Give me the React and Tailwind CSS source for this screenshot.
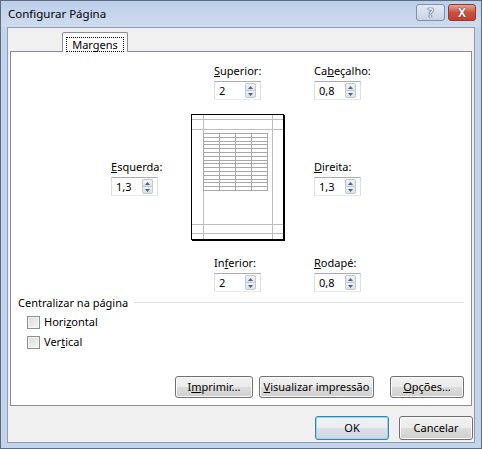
import React from 'react';

const Arrow = ({up}) => (
  <svg width="5" height="3" viewBox="0 0 5 3">
    {up ? <path d="M0 3 L2.5 0 L5 3 Z" fill="#4c607f" /> : <path d="M0 0 L2.5 3 L5 0 Z" fill="#4c607f" />}
  </svg>
)

const Spin = () => (
  <div className="flex flex-col mr-[4px]">
    <div className="w-[11px] h-[8px] flex items-center justify-center border border-[#c3c7ce] rounded-t-[2px] bg-[linear-gradient(#f5f6f8,#e1e4ea)]">
      <Arrow up />
    </div>
    <div className="w-[11px] h-[8px] -mt-px flex items-center justify-center border border-[#c3c7ce] rounded-b-[2px] bg-[linear-gradient(#f0f1f4,#dcdfe6)]">
      <Arrow />
    </div>
  </div>
)

const Field = ({pre = '', ul, post = '', value, className = ''}) => (
  <div className={`flex flex-col w-[47px] ${className}`}>
    <div className="leading-[15px] whitespace-nowrap">
      {pre}<span className="underline">{ul}</span>{post}
    </div>
    <div className="mt-[3px] w-[47px] h-[19px] flex items-center justify-between bg-white border border-[#abadb3] border-x-[#dbdfe6] border-b-[#e3e9ef] pl-[4px]">
      <span className="leading-[15px]">{value}</span>
      <Spin />
    </div>
  </div>
)

const Check = ({pre, ul, post}) => (
  <div className="h-[20px] flex items-center">
    <div className="w-[13px] h-[13px] border border-[#8e8f8f] bg-[linear-gradient(135deg,#d9dadb,#f7f7f7)] shadow-[inset_0_0_0_1px_#f4f4f4]" />
    <span className="ml-[4px]">{pre}<span className="underline">{ul}</span>{post}</span>
  </div>
)

const Btn = ({children, className = ''}) => (
  <button className={`h-[22px] flex items-center justify-center rounded-[3px] border border-[#707070] bg-[linear-gradient(#f2f2f2_0%,#ebebeb_50%,#dddddd_50%,#cfcfcf_100%)] shadow-[inset_0_0_0_1px_#fbfbfb] ${className}`}>
    {children}
  </button>
)

const PagePreview = () => {
  const rows = []
  for (let i = 0; i <= 15; i++) rows.push(Math.round(19 + i * 3.8) + 0.5)
  return (
    <svg width="94" height="127" viewBox="0 0 94 127" className="ml-[33px]">
      <rect x="0.5" y="0.5" width="92" height="125" fill="white" stroke="black" />
      <rect x="93" y="1" width="1" height="126" fill="black" />
      <rect x="1" y="126" width="93" height="1" fill="black" />
      {[12.5, 81.5].map(x => <line key={x} x1={x} y1="1" x2={x} y2="125" stroke="#bdbdbd" />)}
      {[5.5, 15.5, 110.5, 119.5].map(y => <line key={y} x1="1" y1={y} x2="92" y2={y} stroke="#bdbdbd" />)}
      {rows.map(y => <line key={y} x1="12" y1={y} x2="77" y2={y} stroke="#a8a8a8" />)}
      {[12.5, 28.5, 44.5, 60.5, 76.5].map(x => <line key={x} x1={x} y1="19" x2={x} y2="77" stroke="#a8a8a8" />)}
    </svg>
  )
}

const App = () => {
  return (
    <div className="w-[482px] h-[449px] border border-[#5d6c80] bg-[#c4d5eb] flex flex-col font-['Noto_Sans',sans-serif] text-[11px] text-black">
      {/* title bar */}
      <div className="h-[26px] flex justify-between bg-[linear-gradient(#bccfe9,#cfdcef)] pl-[7px] pr-[5px]">
        <div className="pt-[5px] text-[11.5px] leading-[16px]">Configurar Página</div>
        <div className="flex gap-[3px] mt-[3px] self-start">
          <div className="w-[29px] h-[17px] flex items-center justify-center rounded-[3px] border border-[#7e91ad] bg-[linear-gradient(#e3eaf4,#c7d4e6)] text-[12px] font-bold text-[#e9eef5] [text-shadow:0_0_1px_#3d4b60,0_0_1px_#3d4b60,0_0_1px_#3d4b60]">?</div>
          <div className="w-[28px] h-[17px] flex items-center justify-center rounded-[3px] border border-[#8c3a30] bg-[linear-gradient(#e7a393,#c9523f_50%,#c4402c)] text-[12px] font-bold text-white [text-shadow:0_0_1px_#5a1b12,0_0_1px_#5a1b12]">X</div>
        </div>
      </div>

      {/* client area */}
      <div className="flex-1 mx-[6px] mb-[5px] border border-[#8f9db1] bg-[#f0f0f0] flex flex-col">
        <div className="relative z-10 -mb-px mt-[4px] ml-[54px] w-[66px] h-[20px] border border-b-0 border-[#898c95] rounded-t-[2px] bg-white pt-[4px] px-[3px]">
          <div className="h-[15px] border border-dotted border-black flex items-center justify-center leading-[13px]">Margens</div>
        </div>

        <div className="mx-[2px] h-[355px] border border-[#898c95] bg-white flex flex-col">
          <div className="flex pt-[11px] pl-[203px]">
            <Field ul="S" post="uperior:" value="2" />
            <Field className="ml-[53px]" pre="Ca" ul="b" post="eçalho:" value="0,8" />
          </div>

          <div className="flex items-center mt-[14px] pl-[100px]">
            <Field ul="E" post="squerda:" value="1,3" />
            <PagePreview />
            <Field className="ml-[29px]" ul="D" post="ireita:" value="1,3" />
          </div>

          <div className="flex mt-[14px] pl-[203px]">
            <Field pre="In" ul="f" post="erior:" value="2" />
            <Field className="ml-[53px]" ul="R" post="odapé:" value="0,8" />
          </div>

          <div className="flex items-center mt-[3px] px-[7px] leading-[15px]">
            <span>Centralizar na página</span>
            <div className="flex-1 h-px bg-[#dcdfe3] ml-[6px]" />
          </div>

          <div className="flex flex-col mt-[2px] pl-[16px]">
            <Check pre="Hori" ul="z" post="ontal" />
            <Check pre="Ver" ul="t" post="ical" />
          </div>

          <div className="mt-auto flex justify-end pr-[7px] pb-[7px]">
            <Btn className="w-[78px]">I<span className="underline">m</span>primir...</Btn>
            <Btn className="w-[115px] ml-[6px]"><span className="underline">V</span>isualizar impressão</Btn>
            <Btn className="w-[74px] ml-[16px]"><span className="underline">O</span>pções...</Btn>
          </div>
        </div>

        <div className="mt-[10px] flex justify-end gap-[10px] pr-[1px]">
          <button className="w-[74px] h-[24px] flex items-center justify-center rounded-[3px] border border-[#3c7fb1] bg-[linear-gradient(#f2f4f6_0%,#e9edf1_50%,#dae0e6_50%,#cfd6dd_100%)] shadow-[inset_0_0_0_1px_#93d8f7]">OK</button>
          <Btn className="w-[74px] h-[24px]">Cancelar</Btn>
        </div>
      </div>
    </div>
  );
};

export default App;
